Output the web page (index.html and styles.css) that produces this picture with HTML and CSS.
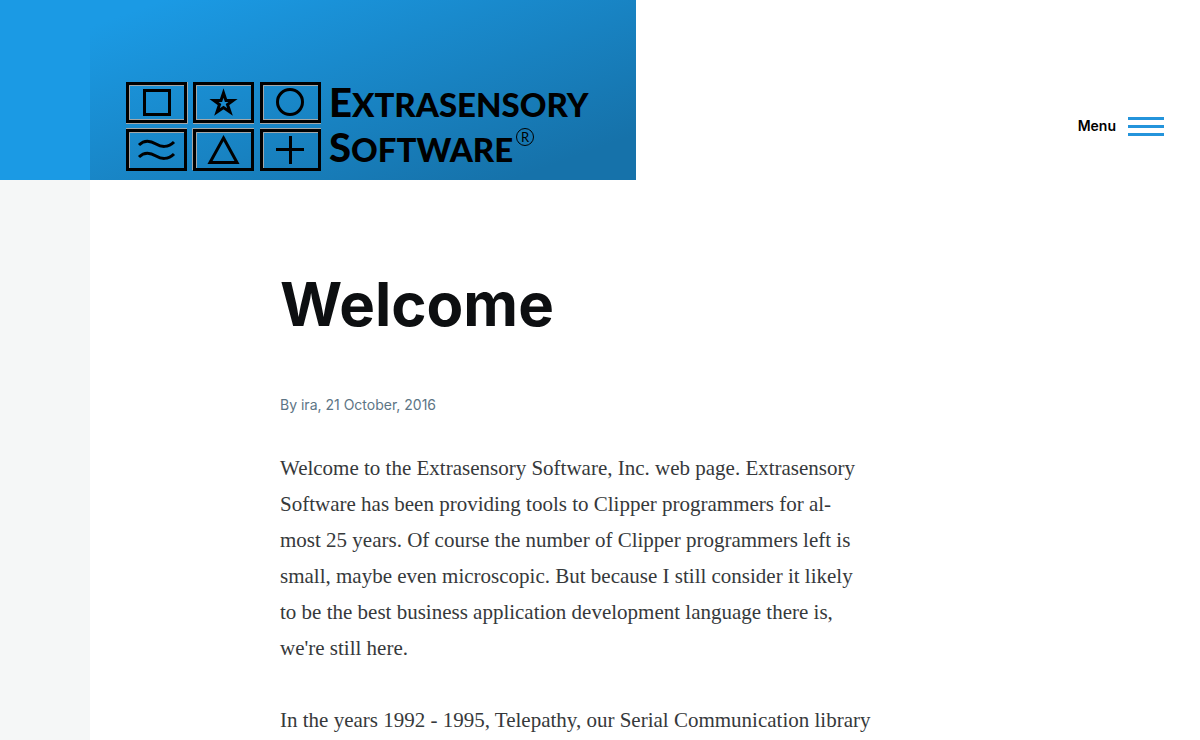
FILE: index.html
```html
<!DOCTYPE html>
<html lang="en">
<head>
<meta charset="utf-8">
<meta name="viewport" content="width=device-width, initial-scale=1">
<title>Welcome | Extrasensory Software</title>
<link rel="stylesheet" href="styles.css">
</head>
<body>
<div class="page">
  <header class="header">
    <div class="header-edge"></div>
    <a class="brand" href="#" aria-label="Extrasensory Software home">
      <svg class="logo" width="480" height="108" viewBox="126 68 480 108" aria-hidden="true">
        <g fill="none" stroke="#a3a7a8" stroke-width="1">
          <path d="M129.500 121V85.500H184M196.500 121V85.500H251M263.500 121V85.500H318M129.500 168V132.500H184M196.500 168V132.500H251M263.500 168V132.500H318M126 123.500H187.500V82M193 123.500H254M260 123.500H321M126 128.500H187M192.500 170V128.500H254M260 128.500H321M129 119.500H184M196 119.500H251M263 119.500H318"/>
        </g>
        <g fill="none" stroke="#000" stroke-width="3">
          <path d="M127.500 83.500H185.500V121.500H127.500ZM194.500 83.500H252.500V121.500H194.500ZM261.500 83.500H319.500V121.500H261.500ZM127.500 130.500H185.500V169.500H127.500ZM194.500 130.500H252.500V169.500H194.500ZM261.500 130.500H319.500V169.500H261.500Z"/>
          <path d="M144.500 90.500H169.500V114.500H144.500Z"/>
          <path d="M223.500 93L226 100.500H233L227.500 104.500L230 112L223.500 107.500L217 112L219.500 104.500L214 100.500H221Z"/>
          <circle cx="290" cy="102" r="12.500"/>
          <path d="M139 145C145 139 151 141 156 144S168 148 174 142M139 157C145 151 151 153 156 156S168 160 174 154"/>
          <path d="M223.500 138L237 162.500H210Z"/>
          <path d="M290.500 136V164M276 149.500H304"/>
        </g>
        <g class="logo-text">
          <text x="329" y="117"><tspan class="cap">E</tspan>XTRASENSORY</text>
          <text x="329" y="162"><tspan class="cap">S</tspan>OFTWARE</text>
          <text class="mark" x="521" y="142">R</text>
        </g>
        <circle cx="525" cy="137" r="8.500" fill="none" stroke="#000"/>
      </svg>
    </a>
    <button class="menu" type="button">
      <span>Menu</span>
      <svg width="36" height="19" viewBox="0 0 36 19" aria-hidden="true"><path d="M0 0H36V3H0ZM0 8H36V11H0ZM0 16H36V19H0Z" fill="#2494db"/></svg>
    </button>
  </header>
  <main class="main">
    <article class="article">
      <h1>Welcome</h1>
      <p class="meta">By ira, 21 October, 2016</p>
      <p>Welcome to the Extrasensory Software, Inc. web page. Extrasensory<br>
        Software has been providing tools to Clipper programmers for al-<br>
        most 25 years. Of course the number of Clipper programmers left is<br>
        small, maybe even microscopic. But because I still consider it likely<br>
        to be the best business application development language there is,<br>
        we're still here.</p>
      <p>In the years 1992 - 1995, Telepathy, our Serial Communication library</p>
    </article>
  </main>
</div>
</body>
</html>
```

FILE: styles.css
```css
* { box-sizing: border-box; }
body {
  margin: 0;
  color: #36393b;
  font-family: "Liberation Serif", serif;
}
.page {
  display: flex;
  flex-direction: column;
  min-height: 100vh;
  background: linear-gradient(90deg, #f5f7f7 90px, #fff 90px);
}
.header {
  display: flex;
  min-height: 180px;
  background: #fff;
}
.header-edge {
  flex: 0 0 90px;
  background: #1b9ae4;
}
.brand {
  display: flex;
  align-items: flex-end;
  padding: 0 30px 4px 36px;
  background: linear-gradient(160deg, #1b9ae4 7%, #1672aa 88%);
}
.logo { display: block; }
.logo-text {
  font-family: Lato, sans-serif;
  font-size: 33px;
  font-weight: 900;
}
.cap { font-size: 40px; }
.mark {
  font-size: 13px;
  font-weight: 400;
}
.menu {
  display: flex;
  align-items: center;
  gap: 12px;
  margin: 72px 36px 0 auto;
  padding: 0;
  border: 0;
  background: none;
  color: #000;
  font: 600 14px/18px Inter, sans-serif;
}
.main {
  flex: 1;
  margin-left: 90px;
  padding: 88px 36px 0 190px;
}
.article { max-width: 620px; }
h1 {
  margin: 0;
  color: #0d0f11;
  font: 700 60px/72px Inter, sans-serif;
}
.article p {
  margin: 0 0 36px;
  font-size: 21px;
  line-height: 36px;
}
.article .meta {
  margin: 56px 0 36px;
  color: #5d7585;
  font: 400 14px/18px Inter, sans-serif;
}
```
